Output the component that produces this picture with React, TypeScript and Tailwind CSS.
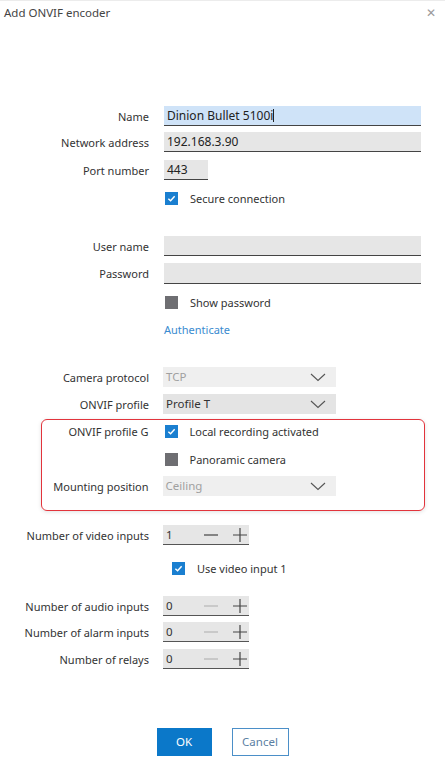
import React from 'react';

const font = { fontFamily: '"Noto Sans", "Open Sans", sans-serif' };

const Label = ({ children, w = 'w-[149px]' }: { children: React.ReactNode; w?: string }) => (
  <div className={`${w} shrink-0 text-right text-[11px] text-[#333] leading-none whitespace-nowrap`}>{children}</div>
);

const Check = ({ checked }: { checked: boolean }) =>
  checked ? (
    <div className="w-[13px] h-[13px] bg-[#1a7fd0] flex items-center justify-center">
      <svg width="9" height="9" viewBox="0 0 10 10">
        <path d="M1.5 5.2 L4 7.5 L8.5 2.5" fill="none" stroke="white" strokeWidth="1.6" />
      </svg>
    </div>
  ) : (
    <div className="w-[13px] h-[13px] bg-[#6e6e72]" />
  );

const CheckRow = ({ checked, text, label = '', indent = false, mt, w }: { checked: boolean; text: string; label?: string; indent?: boolean; mt: string; w?: string }) => (
  <div className={`flex items-center h-4 ${mt}`}>
    <Label w={w}>{label}</Label>
    <div className={`flex items-center ${indent ? 'ml-[23px]' : 'ml-[16px]'}`}>
      <Check checked={checked} />
      <span className="ml-[12px] text-[11px] text-[#333] leading-none">{text}</span>
    </div>
  </div>
);

const Chevron = () => (
  <svg width="16" height="9" viewBox="0 0 16 9" className="mr-[10px]">
    <path d="M1 1 L8 7.5 L15 1" fill="none" stroke="#555" strokeWidth="1.1" />
  </svg>
);

const Select = ({ value, disabled }: { value: string; disabled?: boolean }) => (
  <div className={`ml-[14px] w-[173px] h-5 flex items-center justify-between ${disabled ? 'bg-[#efefef]' : 'bg-[#e4e4e4]'}`}>
    <span className={`ml-[3px] text-[11.5px] leading-none ${disabled ? 'text-[#a0a0a0]' : 'text-[#333]'}`}>{value}</span>
    <Chevron />
  </div>
);

const Spinner = ({ value, minusOn }: { value: string; minusOn: boolean }) => (
  <div className="ml-[14px] w-[86px] h-5 bg-[#e6e6e6] border-b-[1.5px] border-[#555] flex items-center">
    <span className="ml-[3px] w-[38px] text-[11.5px] text-[#333] leading-none">{value}</span>
    <svg width="14" height="14" viewBox="0 0 14 14">
      <path d="M0 7 H14" stroke={minusOn ? '#444' : '#b5b5b5'} strokeWidth="1.2" />
    </svg>
    <svg width="14" height="14" viewBox="0 0 14 14" className="ml-[15px]">
      <path d="M0 7 H14 M7 0 V14" stroke="#444" strokeWidth="1.2" />
    </svg>
  </div>
);

const Row = ({ label, children, mt = '', w }: { label: string; children: React.ReactNode; mt?: string; w?: string }) => (
  <div className={`flex items-center ${mt}`}>
    <Label w={w}>{label}</Label>
    {children}
  </div>
);

const TextBox = ({ w, h = 'h-5', bg = 'bg-[#e6e6e6]', children }: { w: string; h?: string; bg?: string; children?: React.ReactNode }) => (
  <div className={`ml-[15px] ${w} ${h} ${bg} border-b-[1.5px] border-[#444] flex items-center`}>{children}</div>
);

export default function App() {
  return (
    <div className="w-[445px] h-[776px] bg-white relative overflow-hidden border-t border-[#ececec]" style={font}>
      {/* Title bar */}
      <div className="h-[24px] flex items-center justify-between px-[4px]">
        <span className="text-[11.5px] text-[#444] leading-none">Add ONVIF encoder</span>
        <span className="text-[12px] text-[#9a9a9a] leading-none mr-[5px]">✕</span>
      </div>

      <div className="mt-[81px] flex flex-col">
        <Row label="Name">
          <TextBox w="w-[257px]" bg="bg-[#cfe3f8]">
            <span className="ml-[3px] text-[12px] text-[#222] leading-none">Dinion Bullet 5100i</span>
            <span className="w-px h-[13px] bg-[#222]" />
          </TextBox>
        </Row>
        <Row label="Network address" mt="mt-[6px]">
          <TextBox w="w-[257px]">
            <span className="ml-[3px] text-[12px] text-[#222] leading-none">192.168.3.90</span>
          </TextBox>
        </Row>
        <Row label="Port number" mt="mt-[8px]">
          <TextBox w="w-[44px]">
            <span className="ml-[3px] text-[12px] text-[#222] leading-none">443</span>
          </TextBox>
        </Row>
        <CheckRow checked text="Secure connection" mt="mt-[10px]" />

        <Row label="User name" mt="mt-[30px]">
          <TextBox w="w-[257px]" />
        </Row>
        <Row label="Password" mt="mt-[7px]">
          <TextBox w="w-[257px]" h="h-[21px]" />
        </Row>
        <CheckRow checked={false} text="Show password" mt="mt-[10px]" />
        <div className="flex items-center h-4 mt-[11px]">
          <Label>{''}</Label>
          <span className="ml-[15px] text-[11px] text-[#3a8bd0] leading-none">Authenticate</span>
        </div>

        <Row label="Camera protocol" mt="mt-[30px]">
          <Select value="TCP" disabled />
        </Row>
        <Row label="ONVIF profile" mt="mt-[7px]">
          <Select value="Profile T" />
        </Row>

        {/* Highlighted profile G section */}
        <div className="ml-[41px] mt-[5px] w-[384px] h-[92px] border-[1.5px] border-[#e2343c] rounded-[6px] shadow-[0_1px_4px_rgba(0,0,0,0.12)] flex flex-col">
          <CheckRow checked label="ONVIF profile G" text="Local recording activated" mt="mt-[3px]" w="w-[106.5px]" />
          <CheckRow checked={false} text="Panoramic camera" mt="mt-[12px]" w="w-[106.5px]" />
          <Row label="Mounting position" mt="mt-[9px]" w="w-[106.5px]">
            <Select value="Ceiling" disabled />
          </Row>
        </div>

        <Row label="Number of video inputs" mt="mt-[14px]">
          <Spinner value="1" minusOn />
        </Row>
        <CheckRow checked text="Use video input 1" indent mt="mt-[15px]" />

        <Row label="Number of audio inputs" mt="mt-[20px]">
          <Spinner value="0" minusOn={false} />
        </Row>
        <Row label="Number of alarm inputs" mt="mt-[6px]">
          <Spinner value="0" minusOn={false} />
        </Row>
        <Row label="Number of relays" mt="mt-[7px]">
          <Spinner value="0" minusOn={false} />
        </Row>

        <div className="mt-[59px] flex justify-center gap-[20px]">
          <button className="w-[55px] h-[28px] bg-[#0b78c9] text-white text-[11.5px] leading-none">OK</button>
          <button className="w-[57px] h-[28px] bg-white border-[1.5px] border-[#4b8fc8] text-[#5b7fa3] text-[11.5px] leading-none">Cancel</button>
        </div>
      </div>
    </div>
  );
}
